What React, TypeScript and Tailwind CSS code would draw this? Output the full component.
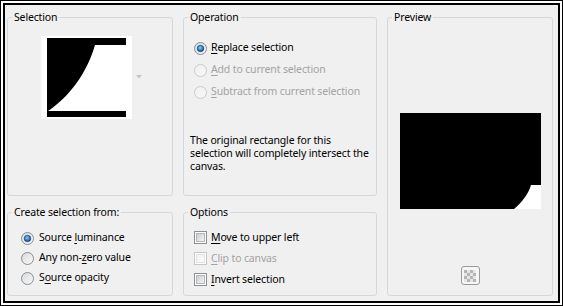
import React, { useId } from "react";

const FONT = { fontFamily: '"Noto Sans", "Open Sans", sans-serif' };

function Radio({ checked, disabled }: { checked?: boolean; disabled?: boolean }) {
  const id = useId().replace(/:/g, "");
  return (
    <svg width="13" height="13" viewBox="0 0 13 13" className="shrink-0">
      <defs>
        <linearGradient id={`f${id}`} x1="0" y1="0" x2="1" y2="1">
          <stop offset="0" stopColor={disabled ? "#f0f0f0" : "#d6d9dd"} />
          <stop offset="1" stopColor={disabled ? "#f8f8f8" : "#fafafa"} />
        </linearGradient>
        <radialGradient id={`d${id}`} cx="0.45" cy="0.4" r="0.6">
          <stop offset="0" stopColor="#9ad0ff" />
          <stop offset="0.5" stopColor="#3c88d6" />
          <stop offset="1" stopColor="#123d70" />
        </radialGradient>
      </defs>
      <circle cx="6.5" cy="6.5" r="6" fill={`url(#f${id})`} stroke={disabled ? "#c9c9c9" : "#8a8c8e"} />
      {checked && <circle cx="6.5" cy="6.5" r="3.3" fill={`url(#d${id})`} stroke="#1a4a80" strokeWidth="0.6" />}
    </svg>
  );
}

function Check({ disabled }: { disabled?: boolean }) {
  const id = useId().replace(/:/g, "");
  return (
    <svg width="13" height="13" viewBox="0 0 13 13" className="shrink-0">
      <defs>
        <linearGradient id={`c${id}`} x1="0" y1="0" x2="1" y2="1">
          <stop offset="0" stopColor={disabled ? "#f2f2f2" : "#c9cdd2"} />
          <stop offset="1" stopColor={disabled ? "#fafafa" : "#f6f6f6"} />
        </linearGradient>
      </defs>
      <rect x="0.5" y="0.5" width="12" height="12" fill="#fff" stroke={disabled ? "#c7c7c7" : "#8e8f8f"} />
      <rect x="2.5" y="2.5" width="8" height="8" fill={`url(#c${id})`} stroke={disabled ? "#e2e2e2" : "#b3b7bc"} />
    </svg>
  );
}

function U({ children }: { children: React.ReactNode }) {
  return <span className="underline underline-offset-[2px]">{children}</span>;
}

function Group({
  title,
  className,
  children,
}: {
  title: string;
  className?: string;
  children?: React.ReactNode;
}) {
  return (
    <fieldset className={`border border-[#d5d8da] rounded-[3px] px-[4px] min-w-0 ${className ?? ""}`}>
      <legend className="px-[2px] leading-[14px] text-[10.5px] tracking-[-0.15px] text-black">{title}</legend>
      {children}
    </fieldset>
  );
}

export default function App() {
  return (
    <div className="w-[563px] h-[306px] bg-white border border-black p-[2px] flex" style={FONT}>
      <div className="flex-1 border-2 border-black bg-[#f0f0f0] pt-[5px] pl-[2px]">
        <div className="grid grid-cols-[166px_194px_166px] grid-rows-[186px_91px] gap-x-[10px] gap-y-[9px] text-[10.5px] tracking-[-0.15px] text-black whitespace-nowrap">
          <Group title="Selection">
            <div className="flex items-center justify-center mt-[12px] gap-[4px] pl-[2px]">
              <div className="w-[91px] h-[83px] bg-white pl-[6px] pt-[2px]">
                <svg width="79" height="79" viewBox="0 0 79 79">
                  <rect width="79" height="79" fill="#000" />
                  <path d="M48,7 H79 V73 H1 C15,64 38,42 48,7 Z" fill="#fff" />
                </svg>
              </div>
              <svg width="6" height="4" viewBox="0 0 6 4" className="mb-[2px]">
                <path d="M0,0 H6 L3,3.5 Z" fill="#c4c4c4" />
              </svg>
            </div>
          </Group>

          <Group title="Operation">
            <div className="mt-[13px] ml-[6px] flex flex-col">
              <label className="h-[22px] flex items-center gap-[4px]">
                <Radio checked />
                <span>
                  <U>R</U>eplace selection
                </span>
              </label>
              <label className="h-[22px] flex items-center gap-[4px] text-[#a3a3a3]">
                <Radio disabled />
                <span>
                  <U>A</U>dd to current selection
                </span>
              </label>
              <label className="h-[22px] flex items-center gap-[4px] text-[#a3a3a3]">
                <Radio disabled />
                <span>
                  <U>S</U>ubtract from current selection
                </span>
              </label>
            </div>
            <p className="mt-[31px] ml-[2px] leading-[13px]">
              The original rectangle for this
              <br />
              selection will completely intersect the
              <br />
              canvas.
            </p>
          </Group>

          <Group title="Preview" className="row-span-2">
            <div className="flex flex-col items-center">
              <svg width="141" height="96" viewBox="0 0 141 96" className="mt-[89px]">
                <rect width="141" height="96" fill="#000" />
                <path d="M131,72 H141 V96 H114 C121,90 128,82 131,72 Z" fill="#fff" />
              </svg>
              <div className="mt-[57px] w-[19px] h-[19px] rounded-[3px] border border-[#9a9a9a] bg-[#f6f6f6] flex items-center justify-center">
                <div className="grid grid-cols-4 w-[12px] h-[12px]">
                  {Array.from({ length: 16 }).map((_, i) => (
                    <div
                      key={i}
                      className={((Math.floor(i / 4) + (i % 4)) % 2 === 0 ? "bg-[#b4b4b4]" : "bg-[#e6e6e6]") + " w-[3px] h-[3px]"}
                    />
                  ))}
                </div>
              </div>
            </div>
          </Group>

          <Group title="Create selection from:">
            <div className="mt-[9px] ml-[9px] flex flex-col">
              <label className="h-[20px] flex items-center gap-[5px]">
                <Radio checked />
                <span>
                  Source <U>l</U>uminance
                </span>
              </label>
              <label className="h-[20px] flex items-center gap-[5px]">
                <Radio />
                <span>
                  Any non-<U>z</U>ero value
                </span>
              </label>
              <label className="h-[20px] flex items-center gap-[5px]">
                <Radio />
                <span>
                  S<U>o</U>urce opacity
                </span>
              </label>
            </div>
          </Group>

          <Group title="Options">
            <div className="mt-[8px] ml-[6px] flex flex-col">
              <label className="h-[21px] flex items-center gap-[4px]">
                <Check />
                <span>
                  <U>M</U>ove to upper left
                </span>
              </label>
              <label className="h-[21px] flex items-center gap-[4px] text-[#a3a3a3]">
                <Check disabled />
                <span>
                  <U>C</U>lip to canvas
                </span>
              </label>
              <label className="h-[21px] flex items-center gap-[4px]">
                <Check />
                <span>
                  <U>I</U>nvert selection
                </span>
              </label>
            </div>
          </Group>
        </div>
      </div>
    </div>
  );
}
